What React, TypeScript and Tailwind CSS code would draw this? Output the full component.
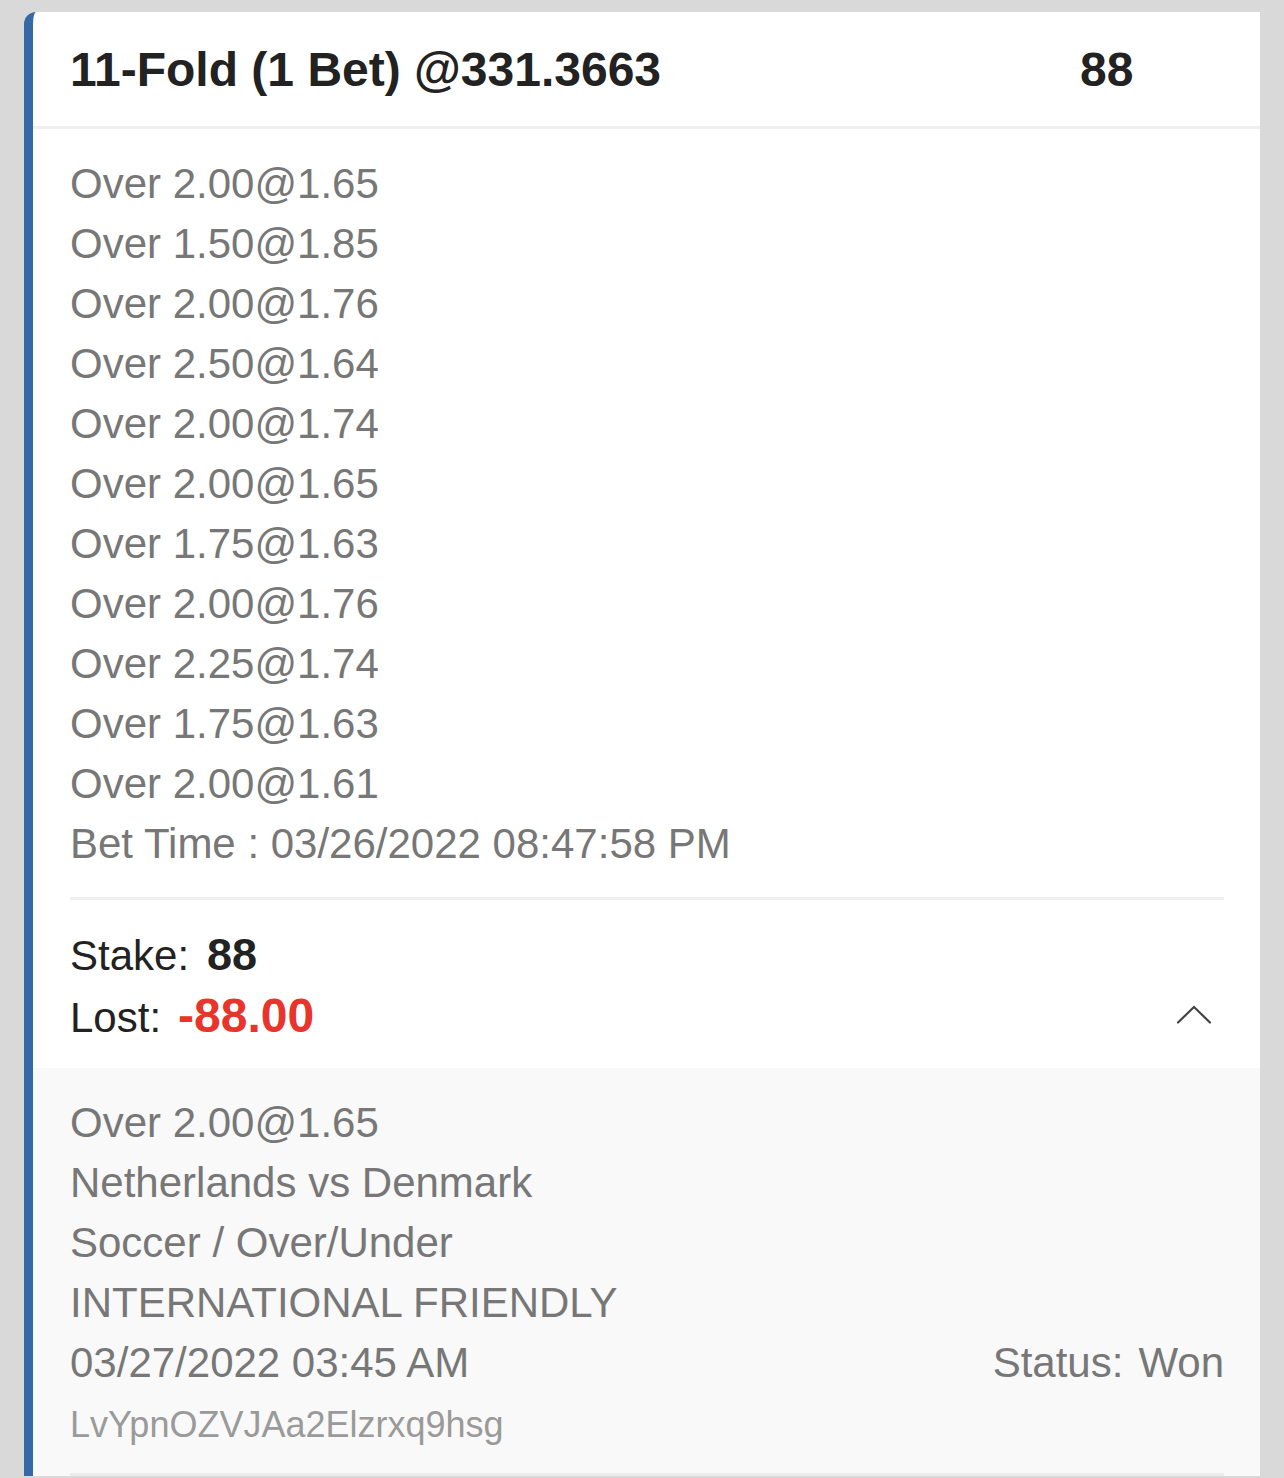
import React from 'react';

const legs = [
  'Over 2.00@1.65',
  'Over 1.50@1.85',
  'Over 2.00@1.76',
  'Over 2.50@1.64',
  'Over 2.00@1.74',
  'Over 2.00@1.65',
  'Over 1.75@1.63',
  'Over 2.00@1.76',
  'Over 2.25@1.74',
  'Over 1.75@1.63',
  'Over 2.00@1.61',
];

const ChevronUp = () => (
  <svg width="36" height="20" viewBox="0 0 36 20" fill="none">
    <path d="M2 17.5 L18 2 L34 17.5" stroke="#444" strokeWidth="2.2" strokeLinecap="round" strokeLinejoin="miter" />
  </svg>
);

const App = () => {
  return (
    <div
      className="min-h-screen bg-[#d9d9d9] pt-3 pl-6 pr-6"
      style={{ fontFamily: '"Liberation Sans", Arial, Helvetica, sans-serif' }}
    >
      <div className="rounded-tl-[12px] border-l-[9px] border-[#3569a5] bg-white overflow-hidden">
        {/* Header */}
        <div className="flex h-[117px] items-center justify-between border-b-[3px] border-[#efefef] pl-[37px] pt-[2px]">
          <span className="text-[48px] font-bold text-[#222]">11-Fold (1 Bet) @331.3663</span>
          <span className="w-[180px] text-[48px] font-bold text-[#222]">88</span>
        </div>

        {/* Legs */}
        <div className="pl-[37px] pr-[36px] pt-[25px] pb-[20px]">
          <div className="text-[42px] leading-[60px] text-[#777]">
            {legs.map((leg, i) => (
              <div key={i}>{leg}</div>
            ))}
            <div>Bet Time : 03/26/2022 08:47:58 PM</div>
          </div>

          <div className="mt-[23px] h-[3px] bg-[#efefef]" />

          <div className="mt-[25px] text-[42px] leading-[60px] text-[#222]">
            <div className="flex items-baseline">
              <span>Stake:</span>
              <span className="ml-[18px] text-[45px] font-bold">88</span>
            </div>
            <div className="flex items-center justify-between">
              <div className="flex items-baseline">
                <span>Lost:</span>
                <span className="ml-[17px] text-[48px] font-bold text-[#e8342a]">-88.00</span>
              </div>
              <div className="pr-[12px] pb-[4px]">
                <ChevronUp />
              </div>
            </div>
          </div>
        </div>

        {/* Expanded detail */}
        <div className="bg-[#f9f9f9] pl-[37px] pr-[36px] pt-[25px]">
          <div className="text-[42px] leading-[60px] text-[#777]">
            <div>Over 2.00@1.65</div>
            <div>Netherlands vs Denmark</div>
            <div>Soccer / Over/Under</div>
            <div>INTERNATIONAL FRIENDLY</div>
            <div className="flex justify-between">
              <span>03/27/2022 03:45 AM</span>
              <span>
                Status:<span className="ml-[15px]">Won</span>
              </span>
            </div>
          </div>
          <div className="text-[36px] leading-[64px] text-[#9a9a9a]">LvYpnOZVJAa2Elzrxq9hsg</div>
          <div className="mt-[16px] h-[3px] bg-[#ebebeb]" />
        </div>
      </div>
    </div>
  );
};

export default App;
